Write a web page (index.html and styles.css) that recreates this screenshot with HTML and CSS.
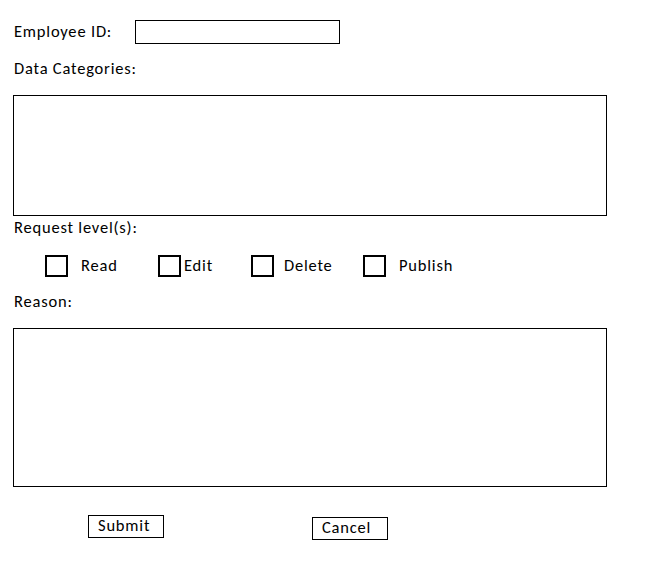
FILE: index.html
```html
<!DOCTYPE html>
<html>
<head>
<meta charset="utf-8">
<link rel="stylesheet" href="styles.css">
</head>
<body>
<form class="form">
  <div class="row-id">
    <label class="label">Employee ID:</label>
    <div class="input"></div>
  </div>
  <div class="label label-cat">Data Categories:</div>
  <div class="area area-cat"></div>
  <div class="label label-level">Request level(s):</div>
  <div class="checks">
    <div class="check check-read"><span class="box"></span><span class="ctext">Read</span></div>
    <div class="check check-edit"><span class="box"></span><span class="ctext">Edit</span></div>
    <div class="check check-delete"><span class="box"></span><span class="ctext">Delete</span></div>
    <div class="check check-publish"><span class="box"></span><span class="ctext">Publish</span></div>
  </div>
  <div class="label label-reason">Reason:</div>
  <div class="area area-reason"></div>
  <div class="buttons">
    <div class="btn btn-submit">Submit</div>
    <div class="btn btn-cancel">Cancel</div>
  </div>
</form>
</body>
</html>
```
FILE: styles.css
```css
* { box-sizing: border-box; }
html, body { margin: 0; padding: 0; background: #fff; }
body {
  font-family: Carlito, Calibri, Lato, "Liberation Sans", sans-serif;
  font-size: 16.5px;
  letter-spacing: 0.8px;
  color: #000;
}
.form {
  display: flex;
  flex-direction: column;
  align-items: flex-start;
  padding: 20px 0 0 13px;
  width: 650px;
  height: 567px;
}
.label {
  display: block;
  line-height: 18px;
  height: 20px;
  padding-left: 1px;
  white-space: nowrap;
}
.row-id {
  display: flex;
  align-items: center;
  height: 24px;
}
.row-id .label { width: 122px; }
.input {
  width: 205px;
  height: 24px;
  border: 1px solid #000;
}
.label-cat { margin-top: 15px; }
.area {
  border: 1px solid #000;
  width: 594px;
}
.area-cat { margin-top: 16px; height: 121px; }
.label-level { margin-top: 2px; }
.checks {
  display: flex;
  align-items: center;
  height: 22px;
  margin-top: 17px;
  padding-left: 32px;
}
.check {
  display: flex;
  align-items: center;
}
.box {
  width: 23px;
  height: 22px;
  border: 2px solid #000;
}
.ctext { line-height: 18px; height: 20px; white-space: nowrap; }
.check-read .ctext { margin-left: 13px; width: 77px; }
.check-edit .ctext { margin-left: 3px; width: 67px; }
.check-delete .ctext { margin-left: 10px; width: 79px; }
.check-publish .ctext { margin-left: 13px; }
.label-reason { margin-top: 15px; }
.area-reason { margin-top: 16px; height: 159px; }
.buttons {
  display: flex;
  align-items: flex-start;
  margin-top: 28px;
  padding-left: 75px;
}
.btn {
  border: 1px solid #000;
  width: 76px;
  height: 23px;
  line-height: 19px;
  padding-left: 9px;
  white-space: nowrap;
}
.btn-cancel {
  margin-left: 148px;
  margin-top: 2px;
}
```
